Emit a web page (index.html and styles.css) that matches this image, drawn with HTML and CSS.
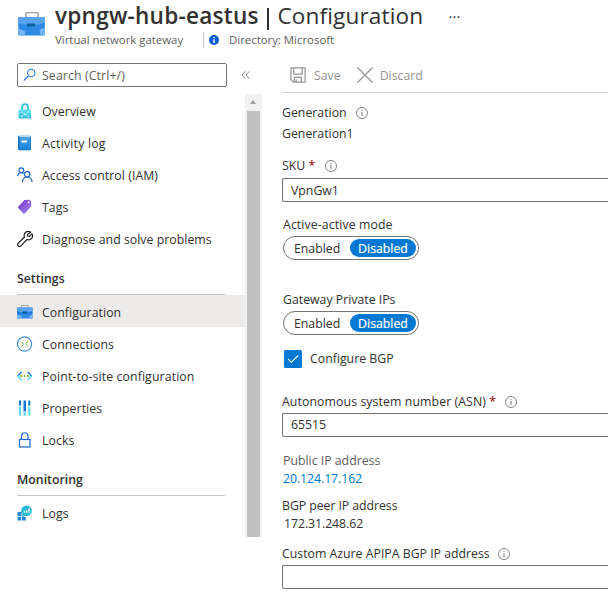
FILE: index.html
```html
<!DOCTYPE html>
<html lang="en">
<head>
<meta charset="utf-8">
<title>vpngw-hub-eastus | Configuration</title>
<link rel="stylesheet" href="styles.css">
</head>
<body>
<svg class="defs" width="0" height="0" aria-hidden="true">
  <defs>
    <linearGradient id="box" x1="0" y1="0" x2="0" y2="1"><stop offset="0" stop-color="#5ea0ef"/><stop offset="1" stop-color="#1f7ad8"/></linearGradient>
    <linearGradient id="cyan" x1="0" y1="0" x2="0" y2="1"><stop offset="0" stop-color="#5ee3fa"/><stop offset="1" stop-color="#32bedd"/></linearGradient>
    <linearGradient id="book" x1="0" y1="0" x2="0" y2="1"><stop offset="0" stop-color="#4aa3e8"/><stop offset="1" stop-color="#1581dc"/></linearGradient>
    <linearGradient id="tag" x1="0" y1="0" x2="1" y2="1"><stop offset="0" stop-color="#6a2fd0"/><stop offset="1" stop-color="#b28be8"/></linearGradient>
    <symbol id="info" viewBox="0 0 12 12"><circle cx="6" cy="6" r="5.500" fill="none" stroke="#797775" stroke-width=".9"/><path d="M6 5v4M6 3v1.100" stroke="#797775" stroke-width="1"/></symbol>
  </defs>
</svg>
<header class="header">
  <svg class="header-icon" viewBox="0 0 28 24">
    <path d="M8 6V1.500q0-.9.900-.9h10.200q.9 0 .9.900V6" fill="none" stroke="#a3a3a3" stroke-width="1.400"/>
    <rect x=".3" y="5" width="26.500" height="18.500" rx="1" fill="#2f8ae6"/>
    <path d="M.3 6a1 1 0 0 1 1-1H25.800a1 1 0 0 1 1 1v5q-6 2.500-8 2.500H9q-3 0-8.700-2.500z" fill="#5aa3f1"/>
    <path d="M.3 11q4 1.500 9 1.500h9q4 0 8.500-1.500v3H.3z" fill="#2c8ae2"/>
    <rect x="9" y="11.500" width="8" height="3" rx=".8" fill="#075f98"/>
    <path d="M.5 16.500l7.500 3-2 4H1zM21.500 18.500q3-3.500 5.300-2v6q-2 2-4 1z" fill="#75b4f7"/>
  </svg>
  <div>
    <h1 class="title"><b>vpngw-hub-eastus</b><i class="bar"></i><span class="page">Configuration</span><span class="more">···</span></h1>
    <div class="subtitle"><span class="kind">Virtual network gateway</span>
      <svg class="badge" viewBox="0 0 10 10"><circle cx="5" cy="5" r="5" fill="#015cda"/><path d="M5 4.200v3.800M5 2v1.300" stroke="#fff" stroke-width="1.500"/></svg>
      <span class="dir">Directory: Microsoft</span></div>
  </div>
</header>
<div class="body">
  <aside class="side">
    <div class="search-row">
      <div class="search"><svg viewBox="0 0 14 14"><circle cx="8.300" cy="5" r="3.800" fill="none" stroke="#1b75d0" stroke-width="1"/><path d="M5.500 7.800L.8 12.500" stroke="#1b75d0" stroke-width="1.100"/></svg><span class="w-search">Search (Ctrl+/)</span></div>
      <svg class="collapse" viewBox="0 0 10 10"><path d="M4.500 1.200L1 5l3.500 3.800M8.500 1.200L5 5l3.500 3.800" fill="none" stroke="#797775" stroke-width=".9"/></svg>
    </div>
    <div class="scroller">
      <nav class="menu">
        <a class="item"><svg viewBox="0 0 16 16"><path d="M5 7V4.200a3 3 0 0 1 6 0V7" fill="none" stroke="#35bfdc" stroke-width="1.800"/><rect x="1.500" y="6.500" width="12.500" height="9" rx="1" fill="url(#cyan)"/><path d="M4.500 9l3.500 2.300L11.500 9M4.500 13.500L8 11.300l3.500 2.200" fill="none" stroke="#a8f0fb" stroke-width=".7"/><path d="M4 9h1M11 9h1M7.500 11.300h1M4 13.500h1M11 13.500h1" stroke="#fff" stroke-width="1.200"/></svg><span>Overview</span></a>
        <a class="item"><svg viewBox="0 0 16 16"><rect x="1" y=".7" width="13" height="14.600" rx="1.200" fill="#1770bc"/><path d="M2.500 1h11v1.300h-11z" fill="#b9dcf5"/><rect x="2.500" y="2" width="11" height="12.500" fill="url(#book)"/><rect x="4.500" y="5.500" width="5.500" height="2" fill="#fff"/></svg><span class="activity">Activity log</span></a>
        <a class="item"><svg viewBox="0 0 16 16" fill="none" stroke="#1b66d2" stroke-width="1.200"><circle cx="4.300" cy="3.200" r="2.400"/><path d="M.7 9Q1 5.700 4.300 5.700q1.500 0 2.400.7"/><circle cx="10.200" cy="7.300" r="2.700"/><path d="M5.400 15q.3-5 4.800-5t4.900 5"/></svg><span>Access control (IAM)</span></a>
        <a class="item"><svg viewBox="0 0 16 16"><path d="M7.500 1l5-.3 1.700 1.600v5.200L7.800 14.500q-.7.600-1.400 0L1.200 9q-.5-.7.100-1.400z" fill="url(#tag)"/><circle cx="11.600" cy="3.200" r="1" fill="#fff"/></svg><span>Tags</span></a>
        <a class="item"><svg viewBox="0 0 16 16" fill="none" stroke="#222" stroke-width="1.200"><path d="M13.700 1.300A4 4 0 0 0 7.500 6L1.200 12.200a1.800 1.800 0 0 0 2.600 2.600L10 8.500a4 4 0 0 0 5-5.700L12.300 5.500 10.500 5l-.1-1.500z" stroke-linejoin="round"/></svg><span class="diagnose">Diagnose and solve problems</span></a>
        <h2 class="group"><span>Settings</span></h2>
        <a class="item on"><svg viewBox="0 0 16 16"><path d="M4.500 4V1.500h6.500V4" fill="none" stroke="#a6a6a6"/><rect x="0" y="3.500" width="15.500" height="11" fill="#2f8ae6"/><path d="M0 3.500h15.500V7Q12 8.500 8 8.500T0 7z" fill="#5aa3f1"/><path d="M0 7.500Q4 9 8 9t7.500-1.500V9.500H0z" fill="#1b78d4"/><rect x="5.500" y="7.400" width="4.500" height="2" fill="#075f98"/><path d="M0 10.500l5 1.800L4 14.500H0zM12.500 12l3-1.500v4h-3z" fill="#75b4f7"/></svg><span>Configuration</span></a>
        <a class="item"><svg viewBox="0 0 16 16" fill="none"><circle cx="7.600" cy="8" r="7.100" stroke="#3b8fdd" stroke-width="1.100"/><path d="M4.300 5.700L6.800 8.300l-2.500 2.500M11.300 4.900L8.800 7.500l2.500 2.600" stroke="#6db33b" stroke-width="1"/></svg><span>Connections</span></a>
        <a class="item"><svg viewBox="0 0 16 16" fill="none"><path d="M4.500 4L.8 8" stroke="#1d82d5" stroke-width="1.600"/><path d="M.8 8l3.700 4" stroke="#50d8f4" stroke-width="1.600"/><path d="M10.800 4l3.700 4" stroke="#1d82d5" stroke-width="1.600"/><path d="M14.500 8l-3.700 4" stroke="#50d8f4" stroke-width="1.600"/><path d="M3.500 8h1.800M6.700 8h1.800M9.900 8h1.800" stroke="#76bc2d" stroke-width="1.800"/></svg><span class="p2s">Point-to-site configuration</span></a>
        <a class="item"><svg viewBox="0 0 16 16"><path d="M2 .5h2v5H2zM6.500.5h2.500v11H6.500zM11.300.5h2v5h-2z" fill="#0f78d4"/><path d="M2 6.500h2v9H2zM6.500 12.500h2.500v3H6.500zM11.300 6.500h2v9h-2z" fill="#4fdcf2"/></svg><span>Properties</span></a>
        <a class="item"><svg viewBox="0 0 16 16" fill="none" stroke="#1b66d2" stroke-width="1.200"><rect x="2.500" y="7.500" width="10.500" height="7.500"/><path d="M4.500 7.500V4a3.250 3.250 0 0 1 6.500 0v3.500"/></svg><span>Locks</span></a>
        <h2 class="group"><span>Monitoring</span></h2>
        <a class="item"><svg viewBox="0 0 16 16"><path d="M.5 7h4v4h-4zM.5 11.700h3.700v3.700H.5zM5 11.700h3.700v3.700H5z" fill="#2386df"/><circle cx="9.500" cy="5.800" r="5.400" fill="#2dbbdc"/><path d="M5 9.500V12l3-1.300" fill="#2dbbdc"/><path d="M7.500 7.800V6M9.700 7.800V5.200M12 7.800V3.300" stroke="#fff" stroke-width="1.300"/></svg><span>Logs</span></a>
      </nav>
      <div class="scrollbar"><i class="arrow"></i><i class="thumb"></i></div>
    </div>
  </aside>
  <main class="main">
    <div class="toolbar">
      <svg class="save" viewBox="0 0 17 17" fill="none" stroke="#979593" stroke-width="1.300"><path d="M1 1h15v15H3.500L1 13.500z"/><path d="M4 1v6.500h9V1M4.500 16v-5h7.500v5M6.500 16v-3"/></svg><span>Save</span>
      <svg class="x" viewBox="0 0 17 17"><path d="M.5.5l16 16M16.500.5l-16 16" stroke="#979593" stroke-width="1.300"/></svg><span class="discard">Discard</span>
    </div>
    <div class="line gen"><span>Generation</span><svg><use href="#info"/></svg></div>
    <div class="line gen1"><span>Generation1</span></div>
    <div class="line sku"><span>SKU <em>*</em></span><svg><use href="#info"/></svg></div>
    <div class="field">VpnGw1</div>
    <div class="line aa"><span>Active-active mode</span></div>
    <div class="toggle"><span>Enabled</span><b>Disabled</b></div>
    <div class="line gp"><span>Gateway Private IPs</span></div>
    <div class="toggle"><span>Enabled</span><b>Disabled</b></div>
    <div class="check"><svg viewBox="0 0 18 18"><rect width="18" height="18" rx="1.500" fill="#0078d4"/><path d="M4 9l3.300 3.300L14.200 5.500" fill="none" stroke="#fff" stroke-width="1.100"/></svg><span>Configure BGP</span></div>
    <div class="line asn"><span>Autonomous system number (ASN) <em>*</em></span><svg><use href="#info"/></svg></div>
    <div class="field asn-field">65515</div>
    <div class="ip pub">Public IP address</div>
    <div class="ip link">20.124.17.162</div>
    <div class="ip peer">BGP peer IP address</div>
    <div class="ip addr">172.31.248.62</div>
    <div class="line custom"><span>Custom Azure APIPA BGP IP address</span><svg><use href="#info"/></svg></div>
    <div class="field asn-field"></div>
  </main>
</div>
</body>
</html>
```
FILE: styles.css
```css
* { box-sizing: border-box; }
body { margin: 0; width: 608px; height: 603px; overflow: hidden; background: #fff; color: #323130; font: 12.3px/20px "Open Sans", "Noto Sans", sans-serif; }
svg { display: block; flex: none; }
.defs { position: absolute; }
span { white-space: nowrap; }

.header { display: flex; height: 63px; padding-left: 18px; }
.header-icon { width: 28px; height: 24px; margin: 12px 9px 0 0; }
.title { display: flex; align-items: center; margin: 0; height: 32px; font-size: 22.6px; line-height: 32px; font-weight: 400; }
.title b { width: 203px; font-weight: 600; letter-spacing: .22px; white-space: nowrap; }
.bar { width: 1.500px; height: 22px; margin: 5px 9px 0 9px; background: #323130; }
.page { width: 145px; letter-spacing: .12px; }
.more { margin-left: 26px; font-size: 15px; }
.subtitle { display: flex; align-items: center; height: 15px; color: #605e5c; font-size: 11.400px; }
.kind { width: 149px; height: 14px; line-height: 14px; border-right: 1px solid #c8c6c4; }
.badge { width: 10px; height: 10px; margin-left: 5px; }
.dir { margin-left: 10px; line-height: 14px; }

.body { display: flex; }
.side { width: 262px; flex: none; }
.search-row { display: flex; height: 31px; padding-left: 17px; align-items: flex-start; }
.search { display: flex; align-items: center; width: 210px; height: 24px; padding-left: 5px; border: 1px solid #75736f; border-radius: 2px; color: #605e5c; }
.search svg { width: 14px; height: 14px; margin-right: 5px; }
.search span { padding-top: 2px; letter-spacing: .12px; }
.collapse { width: 10px; height: 10px; margin: 7px 0 0 14px; }
.scroller { display: flex; height: 443px; }
.menu { width: 245px; }
.item { display: flex; align-items: center; height: 32px; padding: 4px 0 0 17px; letter-spacing: .06px; }
.item svg { width: 16px; height: 16px; margin: -2px 9px 0 0; }
.item.on { background: #edebe9; }
.activity { letter-spacing: .2px; }
.diagnose { letter-spacing: .03px; }
.p2s { letter-spacing: .11px; }
.group { display: flex; align-items: center; margin: 0 20px 0 17px; height: 41px; padding-top: 9px; border-bottom: 1px solid #c8c6c4; font-size: 12.300px; font-weight: 600; }
.scrollbar { width: 17px; padding-left: 2px; background: #f1f1f1; }
.arrow { display: block; width: 0; height: 0; margin: 6px 0 7px 3px; border: solid transparent; border-width: 0 3.500px 4px; border-bottom-color: #a3a3a3; }
.thumb { display: block; width: 13px; height: 426px; background: #c1c1c1; }

.main { flex: 1; min-width: 0; padding-left: 20px; }
.toolbar { display: flex; align-items: center; height: 30px; padding: 0 0 6px 8px; border-bottom: 1px solid #d2d0ce; color: #979593; }
.toolbar svg { width: 16px; height: 16px; }
.toolbar span { margin-left: 8px; padding-top: 2px; }
.toolbar .x { margin-left: 16px; }
.toolbar .discard { margin-left: 7px; }
.line { display: flex; align-items: center; height: 20px; }
.line svg { width: 12px; height: 12px; margin-left: 9px; }
.line em { color: #a4262c; font-style: normal; font-weight: 600; }
.gen { margin-top: 10px; }
.gen .info { margin-left: 8px; }
.gen1 { margin-top: 1px; }
.sku { margin-top: 12px; }
.sku svg { margin-left: 10px; }
.field { height: 24px; margin-top: 2px; padding: 2px 8px 0; border: 1px solid #75736f; border-right: 0; border-radius: 2px 0 0 2px; line-height: 20px; }
.asn-field { margin-top: 1px; padding-top: 1px; }
.aa { margin: 13px 0 0 1px; letter-spacing: .1px; }
.gp { margin: 30px 0 0 1px; }
.toggle { display: flex; align-items: center; width: 136px; height: 24px; margin: 1px 0 0 1px; padding: 0 2px 0 10px; border: 1px solid #75736f; border-radius: 12px; }
.toggle span { width: 56px; padding-top: 2px; }
.toggle b { width: 66px; height: 18px; border-radius: 9px; background: #0078d4; color: #fff; font-weight: 400; line-height: 19px; text-align: center; -webkit-text-stroke: .2px #fff; }
.check { display: flex; height: 20px; margin: 14px 0 0 2px; }
.check svg { width: 18px; height: 18px; margin: 1px 8px 0 0; }
.asn { margin-top: 23px; letter-spacing: .09px; }
.ip { height: 18px; line-height: 18px; }
.pub { margin: 15px 0 0 1px; color: #605e5c; }
.link { margin-left: 1px; color: #0078d4; letter-spacing: -.07px; }
.peer { margin-top: 9px; letter-spacing: -.06px; }
.addr { margin-left: 2px; letter-spacing: -.07px; }
.custom { margin-top: 11px; }
.custom svg { margin-left: 8px; }
```
